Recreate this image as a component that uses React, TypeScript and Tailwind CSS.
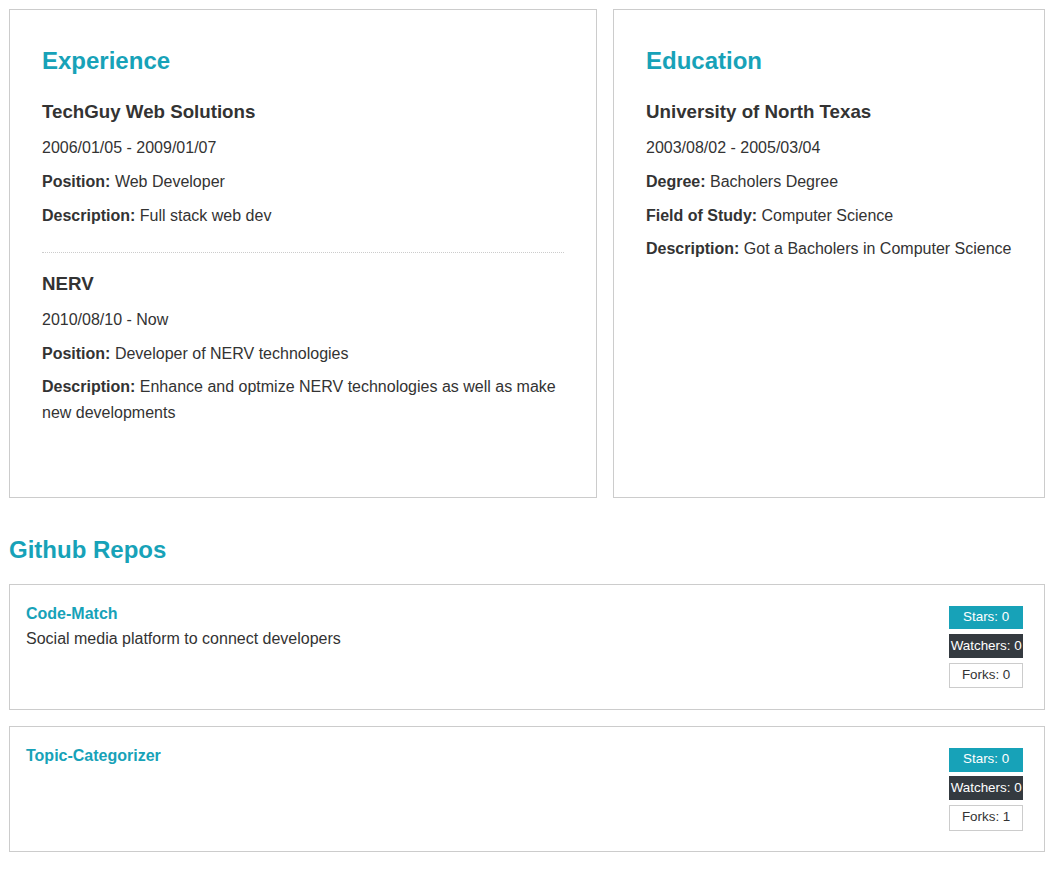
import React from "react";

type Experience = {
  company: string;
  from: string;
  to: string;
  title: string;
  description: string;
};

type Repo = {
  name: string;
  description: string;
  stars: number;
  watchers: number;
  forks: number;
};

const experience: Experience[] = [
  {
    company: "TechGuy Web Solutions",
    from: "2006/01/05",
    to: "2009/01/07",
    title: "Web Developer",
    description: "Full stack web dev",
  },
  {
    company: "NERV",
    from: "2010/08/10",
    to: "Now",
    title: "Developer of NERV technologies",
    description:
      "Enhance and optmize NERV technologies as well as make new developments",
  },
];

const repos: Repo[] = [
  {
    name: "Code-Match",
    description: "Social media platform to connect developers",
    stars: 0,
    watchers: 0,
    forks: 0,
  },
  { name: "Topic-Categorizer", description: "", stars: 0, watchers: 0, forks: 1 },
];

function Field({ label, value }: { label: string; value: string }) {
  return (
    <p className="mb-2">
      <strong>{label}:</strong> {value}
    </p>
  );
}

export default function App() {
  return (
    <div
      className="min-h-screen bg-white pl-[9px] pr-[18px] pt-[9px] text-base leading-[1.6] text-[#333]"
      style={{ fontFamily: '"Liberation Sans", Arial, sans-serif' }}
    >
      <div className="grid grid-cols-[588px_432px] gap-4">
        {/* Experience */}
        <div className="border border-[#ccc] p-8">
          <h2 className="mb-[17px] text-2xl leading-[1.6] font-bold text-[#17a2b8]">
            Experience
          </h2>
          {experience.map((exp, i) => (
            <div
              key={exp.company}
              className={
                i === experience.length - 1
                  ? "mb-4 pb-4"
                  : "mb-4 border-b border-dotted border-[#ccc] pb-4"
              }
            >
              <h3 className="mb-2 text-[18.72px] leading-[1.6] font-bold">
                {exp.company}
              </h3>
              <p className="mb-2">
                {exp.from} - {exp.to}
              </p>
              <Field label="Position" value={exp.title} />
              <Field label="Description" value={exp.description} />
            </div>
          ))}
        </div>

        {/* Education */}
        <div className="border border-[#ccc] p-8">
          <h2 className="mb-[17px] text-2xl leading-[1.6] font-bold text-[#17a2b8]">
            Education
          </h2>
          <div>
            <h3 className="mb-2 text-[18.72px] leading-[1.6] font-bold">
              University of North Texas
            </h3>
            <p className="mb-2">2003/08/02 - 2005/03/04</p>
            <Field label="Degree" value="Bacholers Degree" />
            <Field label="Field of Study" value="Computer Science" />
            <Field label="Description" value="Got a Bacholers in Computer Science" />
          </div>
        </div>
      </div>

      {/* Github repos */}
      <h2 className="mt-[33px] text-2xl leading-[1.6] font-bold text-[#17a2b8]">
        Github Repos
      </h2>
      <div className="mt-[14px]">
        {repos.map((repo) => (
          <div
            key={repo.name}
            className="mb-4 flex justify-between border border-[#ccc] bg-white p-4"
          >
            <div>
              <h4 className="font-bold text-[#17a2b8]">{repo.name}</h4>
              <p>{repo.description}</p>
            </div>
            <div className="m-[4.8px] flex flex-col gap-[4.8px] text-center text-[13.4px] leading-[20.5px]">
              <span className="bg-[#17a2b8] px-[1.6px] py-[1.6px] text-white">
                Stars: {repo.stars}
              </span>
              <span className="bg-[#343a40] px-[1.6px] py-[1.6px] text-white">
                Watchers: {repo.watchers}
              </span>
              <span className="border border-[#ccc] bg-white px-[1.6px] py-[1.6px] text-[#333]">
                Forks: {repo.forks}
              </span>
            </div>
          </div>
        ))}
      </div>
    </div>
  );
}
